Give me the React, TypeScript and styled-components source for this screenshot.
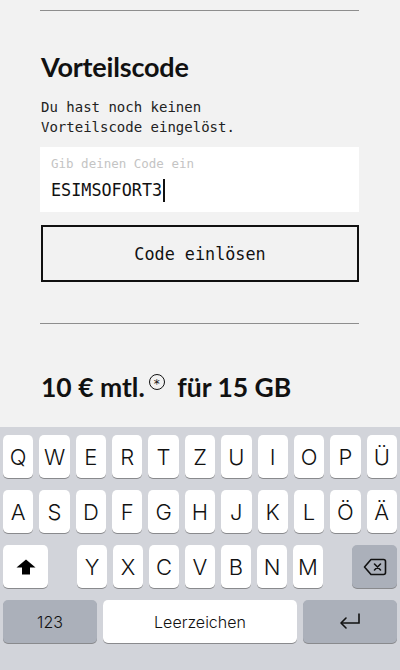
import React from 'react';
import styled, { createGlobalStyle } from 'styled-components';

const GlobalStyle = createGlobalStyle`
  html, body {
    margin: 0;
    padding: 0;
    background: #f2f2f2;
  }
  * {
    box-sizing: border-box;
  }
`;

const MONO = `'DejaVu Sans Mono', 'Liberation Mono', monospace`;
const HEAD = `Lato, 'Noto Sans', sans-serif`;
const KEYS = `Inter, Roboto, 'Noto Sans', sans-serif`;

const ROW_ONE = ['Q', 'W', 'E', 'R', 'T', 'Z', 'U', 'I', 'O', 'P', 'Ü'];
const ROW_TWO = ['A', 'S', 'D', 'F', 'G', 'H', 'J', 'K', 'L', 'Ö', 'Ä'];
const ROW_THREE = ['Y', 'X', 'C', 'V', 'B', 'N', 'M'];

const ShiftIcon = () => (
  <svg width="20" height="16" viewBox="0 0 20 16">
    <path d="M10 0.5 L19.5 8.5 H14 V15.5 H6 V8.5 H0.5 Z" fill="#000" />
  </svg>
);

const BackspaceIcon = () => (
  <svg width="24" height="18" viewBox="0 0 24 18" fill="none" stroke="#111" strokeWidth="1.6">
    <path d="M8 1.5 H20.5 a2 2 0 0 1 2 2 V14.5 a2 2 0 0 1 -2 2 H8 L1.5 9 Z" strokeLinejoin="round" />
    <path d="M11.5 6 L17.5 12 M17.5 6 L11.5 12" strokeLinecap="round" />
  </svg>
);

const ReturnIcon = () => (
  <svg width="24" height="20" viewBox="0 0 24 20" fill="none" stroke="#111" strokeWidth="1.6">
    <path d="M21 1.5 V11 H3" />
    <path d="M8 6 L3 11 L8 16" strokeLinejoin="round" strokeLinecap="round" />
  </svg>
);

export default function App() {
  return (
    <>
      <GlobalStyle />
      <Page>
        <Content>
          <Divider />
          <Heading>Vorteilscode</Heading>
          <Hint>
            Du hast noch keinen
            <br />
            Vorteilscode eingelöst.
          </Hint>
          <InputBox>
            <InputLabel>Gib deinen Code ein</InputLabel>
            <InputValue>
              ESIMSOFORT3
              <Caret />
            </InputValue>
          </InputBox>
          <RedeemButton>Code einlösen</RedeemButton>
          <Divider $gap={41} />
          <Price>
            10 € mtl.<Footnote>*</Footnote> für 15 GB
          </Price>
        </Content>

        <Keyboard>
          <KeyRow>
            {ROW_ONE.map((k) => (
              <Key key={k}>{k}</Key>
            ))}
          </KeyRow>
          <KeyRow>
            {ROW_TWO.map((k) => (
              <Key key={k}>{k}</Key>
            ))}
          </KeyRow>
          <KeyRow>
            <Key $width={45}>
              <ShiftIcon />
            </Key>
            <LetterGroup>
              {ROW_THREE.map((k) => (
                <Key key={k} $width={30}>
                  {k}
                </Key>
              ))}
            </LetterGroup>
            <Key $width={45} $dark>
              <BackspaceIcon />
            </Key>
          </KeyRow>
          <KeyRow>
            <Key $width={94} $dark $small>
              123
            </Key>
            <Key $small>Leerzeichen</Key>
            <Key $width={94} $dark>
              <ReturnIcon />
            </Key>
          </KeyRow>
        </Keyboard>
      </Page>
    </>
  );
}

const Page = styled.div`
  height: 670px;
  width: 400px;
  display: flex;
  flex-direction: column;
  overflow: hidden;
  background: #f2f2f2;
`;

const Content = styled.div`
  flex: 1;
  padding: 10px 41px 0 40px;
  display: flex;
  flex-direction: column;
`;

const Divider = styled.div<{ $gap?: number }>`
  height: 1px;
  background: #8e8e8e;
  margin-top: ${(p) => p.$gap ?? 0}px;
`;

const Heading = styled.h2`
  margin: 40px 0 0 1px;
  font-family: ${HEAD};
  font-weight: 700;
  font-size: 27px;
  line-height: 32px;
  color: #111;
  letter-spacing: -0.2px;
`;

const Hint = styled.p`
  margin: 14px 0 0 1px;
  font-family: ${MONO};
  font-size: 14px;
  line-height: 20px;
  color: #222;
`;

const InputBox = styled.div`
  margin-top: 10px;
  height: 65px;
  background: #fff;
  padding: 9px 11px 0;
  display: flex;
  flex-direction: column;
`;

const InputLabel = styled.span`
  font-family: ${MONO};
  font-size: 12.5px;
  line-height: 16px;
  color: #c4c4c4;
`;

const InputValue = styled.span`
  margin-top: 6px;
  display: flex;
  align-items: center;
  font-family: ${MONO};
  font-size: 16.8px;
  line-height: 24px;
  color: #111;
`;

const Caret = styled.span`
  display: inline-block;
  width: 2px;
  height: 23px;
  margin-left: 1px;
  background: #111;
`;

const RedeemButton = styled.button`
  margin: 13px 0 0 1px;
  height: 57px;
  width: 318px;
  background: transparent;
  border: 2px solid #111;
  border-radius: 0;
  font-family: ${MONO};
  font-size: 16.8px;
  color: #111;
  padding: 0;
`;

const Price = styled.div`
  margin: 47px 0 0 1px;
  font-family: ${HEAD};
  font-weight: 700;
  font-size: 26.5px;
  line-height: 32px;
  color: #111;
  display: flex;
  align-items: flex-start;
  white-space: pre;
`;

const Footnote = styled.span`
  display: inline-flex;
  align-items: center;
  justify-content: center;
  flex: 0 0 16px;
  width: 16px;
  height: 16px;
  margin: 3px 6px 0 4px;
  border: 1.3px solid #111;
  border-radius: 50%;
  font-family: 'DejaVu Sans', sans-serif;
  font-weight: 400;
  font-size: 12px;
  line-height: 1;
  padding-top: 4px;
`;

const Keyboard = styled.div`
  height: 243px;
  background: #d2d4da;
  padding: 8px 3px 0;
  display: flex;
  flex-direction: column;
  gap: 12px;
`;

const KeyRow = styled.div`
  display: flex;
  justify-content: space-between;
  gap: 6px;
`;

const LetterGroup = styled.div`
  display: flex;
  gap: 6px;
`;

const Key = styled.div<{ $width?: number; $dark?: boolean; $small?: boolean }>`
  flex: ${(p) => (p.$width ? `0 0 ${p.$width}px` : '1 1 0')};
  height: 43px;
  border-radius: 5px;
  background: ${(p) => (p.$dark ? '#abb0ba' : '#fff')};
  box-shadow: 0 1px 0 #898a8d;
  display: flex;
  align-items: center;
  justify-content: center;
  font-family: ${KEYS};
  font-weight: 300;
  font-size: ${(p) => (p.$small ? '16px' : '22px')};
  color: #111;
`;
